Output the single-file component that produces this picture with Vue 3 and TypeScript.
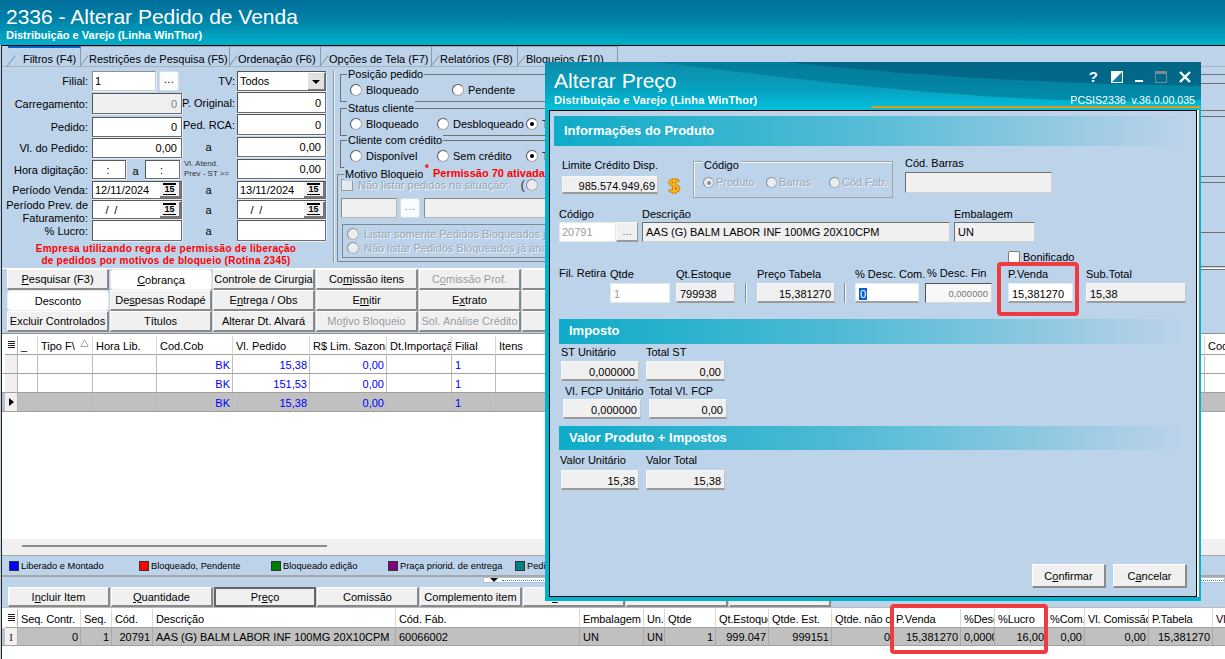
<script setup lang="ts">
interface Part { a: string; u: string; b: string }
interface Btn { label: string; parts: Part; cls: string }

function mk(label: string, cls = ''): Btn {
  const i = label.indexOf('&')
  const parts = i < 0
    ? { a: label, u: '', b: '' }
    : { a: label.slice(0, i), u: label[i + 1], b: label.slice(i + 2) }
  return { label, parts, cls }
}

const tabs = [
  { t: 'Filtros (F4)', w: 73, active: true },
  { t: 'Restrições de Pesquisa (F5)', w: 149 },
  { t: 'Ordenação (F6)', w: 91 },
  { t: 'Opções de Tela (F7)', w: 111 },
  { t: 'Relatórios (F8)', w: 86 },
  { t: 'Bloqueios (F10)', w: 100 },
]

const leftRows = [
  { label: 'Filial:', h: 20, mt: 0, items: [{ k: 'f', w: 64, text: '1', cls: 'l soft' }, { k: 'd', w: 20, cls: '' }] },
  { label: 'Carregamento:', h: 21, mt: 2, items: [{ k: 'f', w: 90, text: '0', cls: 'dis' }] },
  { label: 'Pedido:', h: 20, mt: 3, items: [{ k: 'f', w: 90, text: '0', cls: '' }] },
  { label: 'Vl. do Pedido:', h: 20, mt: 1, items: [{ k: 'f', w: 90, text: '0,00', cls: '' }] },
  { label: 'Hora digitação:', h: 19, mt: 2, items: [{ k: 'f', w: 34, text: ':', cls: 'c' }, { k: 'a', w: 19, text: 'a' }, { k: 'f', w: 35, text: ':', cls: 'c' }] },
  { label: 'Período Venda:', h: 18, mt: 2, items: [{ k: 'x', w: 90, text: '12/11/2024', cls: '' }] },
  { label: 'Período Prev. de Faturamento:', h: 19, mt: 1, two: true, items: [{ k: 'x', w: 90, text: ' / /', cls: 'dt' }] },
  { label: '% Lucro:', h: 21, mt: 1, items: [{ k: 'f', w: 90, text: '', cls: '' }] },
]

const rightRows = [
  { label: 'TV:', h: 20, mt: 0, k: 'combo', text: 'Todos' },
  { label: 'P. Original:', h: 21, mt: 1, k: 'f', text: '0' },
  { label: 'Ped. RCA:', h: 21, mt: 1, k: 'f', text: '0' },
  { label: 'a', h: 20, mt: 2, k: 'f', text: '0,00', ctr: true },
  { label: '', h: 20, mt: 2, k: 'f', text: '0,00', tiny: true },
  { label: 'a', h: 18, mt: 2, k: 'x', text: '13/11/2024', ctr: true },
  { label: 'a', h: 19, mt: 1, k: 'x', text: ' / /', ctr: true, dt: true },
  { label: 'a', h: 21, mt: 1, k: 'f', text: '', ctr: true },
]

const statusOpts = [
  { t: 'Bloqueado', w: 87 },
  { t: 'Desbloqueado', w: 89 },
  { t: 'Todos', w: 60, on: true },
]
const creditOpts = [
  { t: 'Disponível', w: 87 },
  { t: 'Sem crédito', w: 89 },
  { t: 'Todos', w: 60, on: true },
]

const btnRows: Btn[][] = [
  [mk('&Pesquisar (F3)'), mk('&Cobrança', 'flat'), mk('Controle de Cirurgia'), mk('Co&missão itens'), mk('C&omissão Prof.', 'off'), mk('Clientes')],
  [mk('Desconto', 'flat'), mk('De&spesas Rodapé'), mk('E&ntrega / Obs'), mk('E&mitir'), mk('E&xtrato'), mk('')],
  [mk('Excluir Controlados'), mk('Títulos'), mk('Alterar Dt. Alvará'), mk('Mo&tivo Bloqueio', 'off'), mk('Sol. Análise Crédito', 'off'), mk('Su', 'off')],
]

const bottomBtns: Btn[] = [
  mk('I&ncluir Item'), mk('&Quantidade'), mk('Pr&eço', 'focus'), mk('Comissão'), mk('Complemento item'), mk('E&xcluir Item'), mk(''), mk(''),
]

const g1Cols = [
  { t: '_', w: 20 }, { t: 'Tipo F\\', w: 55, sort: true }, { t: 'Hora Lib.', w: 64 }, { t: 'Cod.Cob', w: 76 },
  { t: 'Vl. Pedido', w: 77 }, { t: 'R$ Lim. Sazonal', w: 77 }, { t: 'Dt.Importação', w: 65 },
  { t: 'Filial', w: 44 }, { t: 'Itens', w: 709 }, { t: 'Cod', w: 30 },
]
const g1Rows = [
  { sel: false, v: ['', '', '', 'BK', '15,38', '0,00', '', '1', '', ''] },
  { sel: false, v: ['', '', '', 'BK', '151,53', '0,00', '', '1', '', ''] },
  { sel: true, v: ['', '', '', 'BK', '15,38', '0,00', '', '1', '', ''] },
]
const g1Align = ['l', 'l', 'l', 'r', 'r', 'r', 'l', 'l', 'l', 'l']

const g2Cols = [
  { t: 'Seq. Contr.', w: 63, a: 'r', v: '0' }, { t: 'Seq.', w: 31, a: 'r', v: '1' }, { t: 'Cód.', w: 41, a: 'r', v: '20791' },
  { t: 'Descrição', w: 243, a: 'l', v: 'AAS (G) BALM LABOR INF 100MG 20X10CPM' },
  { t: 'Cód. Fáb.', w: 184, a: 'l', v: '60066002' }, { t: 'Embalagem', w: 64, a: 'l', v: 'UN' },
  { t: 'Un.', w: 21, a: 'l', v: 'UN' }, { t: 'Qtde', w: 51, a: 'r', v: '1' },
  { t: 'Qt.Estoque', w: 53, a: 'r', v: '999.047' }, { t: 'Qtde. Est.', w: 63, a: 'r', v: '999151' },
  { t: 'Qtde. não coletada', w: 61, a: 'r', v: '0' }, { t: 'P.Venda', w: 68, a: 'r', v: '15,381270' },
  { t: '%Desc', w: 34, a: 'l', v: '0,000000' }, { t: '%Lucro', w: 52, a: 'r', v: '16,00' },
  { t: '%Com.', w: 38, a: 'r', v: '0,00' }, { t: 'Vl. Comissão', w: 64, a: 'r', v: '0,00' },
  { t: 'P.Tabela', w: 64, a: 'r', v: '15,381270' }, { t: 'Vl.', w: 30, a: 'r', v: '' },
]

const legend = [
  { t: 'Liberado e Montado', c: '#0000ff', w: 130 },
  { t: 'Bloqueado, Pendente', c: '#ff0000', w: 132 },
  { t: 'Bloqueado edição', c: '#008000', w: 117 },
  { t: 'Praça priorid. de entrega', c: '#800080', w: 127 },
  { t: 'Pedido', c: '#008080', w: 60 },
]

const stripLines = [8, 9, 27, 6, 60, 6, 50, 34, 3]

const priceFields = [
  { label: 'Qtde', value: '1', w: 60, ml: 0, cls: 'ghost' },
  { label: 'Qt.Estoque', value: '799938', w: 59, ml: 6, cls: 'ro l' },
  { sep: true, ml: 10 },
  { label: 'Preço Tabela', value: '15,381270', w: 78, ml: 10, cls: 'ro' },
  { sep: true, ml: 9 },
  { label: '% Desc. Com.', value: '0', w: 64, ml: 9, cls: 'wh l hl' },
  { label: '% Desc. Fin', value: '0,000000', w: 67, ml: 6, cls: 'sunk small', capCls: 'shift' },
  { label: 'P.Venda', value: '15,381270', w: 65, ml: 16, cls: 'wh l' },
  { label: 'Sub.Total', value: '15,38', w: 100, ml: 13, cls: 'ro l' },
]
</script>

<template>
  <div class="app">
    <header class="top">
      <div class="top-title">2336 - Alterar Pedido de Venda</div>
      <div class="top-sub">Distribuição e Varejo (Linha WinThor)</div>
    </header>

    <main class="frame">
      <nav class="tabs">
        <div v-for="t in tabs" :key="t.t" class="tab" :class="{ active: t.active }" :style="{ width: t.w + 'px' }">{{ t.t }}</div>
      </nav>

      <section class="panel">
        <div class="col left">
          <div v-for="r in leftRows" :key="r.label" class="row" :style="{ height: r.h + 'px', marginTop: r.mt + 'px' }">
            <span class="lbl" :class="{ two: r.two }">{{ r.label }}</span>
            <template v-for="(it, i) in r.items" :key="i">
              <span v-if="it.k === 'f'" class="fld" :class="it.cls" :style="{ width: it.w + 'px' }">{{ it.text }}</span>
              <span v-else-if="it.k === 'd'" class="dots" :style="{ width: it.w + 'px' }">...</span>
              <span v-else-if="it.k === 'a'" class="mid" :style="{ width: it.w + 'px' }">{{ it.text }}</span>
              <span v-else class="fld l date" :class="it.cls" :style="{ width: it.w + 'px' }">
                <span class="dtxt">{{ it.text }}</span><span class="cal"><span>15</span></span>
              </span>
            </template>
          </div>
          <p class="warn">Empresa utilizando regra de permissão de liberação<br />de pedidos por motivos de bloqueio (Rotina 2345)</p>
        </div>

        <div class="col right">
          <div v-for="(r, i) in rightRows" :key="i" class="row" :style="{ height: r.h + 'px', marginTop: r.mt + 'px' }">
            <span v-if="r.tiny" class="lbl2 tiny">Vl. Atend.<br />Prev - ST &gt;=</span>
            <span v-else class="lbl2" :class="{ ctr: r.ctr }">{{ r.label }}</span>
            <span v-if="r.k === 'combo'" class="fld l combo"><span>{{ r.text }}</span><span class="arrow"></span></span>
            <span v-else-if="r.k === 'x'" class="fld l date" :class="{ dt: r.dt }"><span class="dtxt">{{ r.text }}</span><span class="cal"><span>15</span></span></span>
            <span v-else class="fld wide">{{ r.text }}</span>
          </div>
        </div>

        <div class="vsep"></div>

        <div class="groups">
          <div class="grp g1">
            <span class="legend">Posição pedido</span>
            <div class="opts">
              <label class="opt" style="width: 102px"><i class="radio"></i>Bloqueado</label>
              <label class="opt"><i class="radio"></i>Pendente</label>
            </div>
          </div>
          <div class="grp g2">
            <span class="legend">Status cliente</span>
            <div class="opts">
              <label v-for="o in statusOpts" :key="o.t" class="opt" :style="{ width: o.w + 'px' }"><i class="radio" :class="{ on: o.on }"></i>{{ o.t }}</label>
            </div>
          </div>
          <div class="grp g3">
            <span class="legend">Cliente com crédito</span>
            <div class="opts">
              <label v-for="o in creditOpts" :key="o.t" class="opt" :style="{ width: o.w + 'px' }"><i class="radio" :class="{ on: o.on }"></i>{{ o.t }}</label>
            </div>
          </div>
          <div class="grp g4">
            <span class="legend">Motivo Bloqueio</span>
            <span class="perm"><sup>*</sup> Permissão 70 ativada</span>
            <div class="m-check">
              <i class="check"></i><span class="off">Não listar pedidos na situação:</span>
              <span class="paren">(</span><i class="radio dis"></i>
            </div>
            <div class="m-fields">
              <span class="box"></span><span class="dots small">...</span><span class="box long"></span>
            </div>
            <div class="inner">
              <div class="m-radio"><i class="radio dis"></i><span class="off">Listar somente Pedidos Bloqueados já analisados</span></div>
              <div class="m-radio"><i class="radio dis"></i><span class="off">Não listar Pedidos Bloqueados já analisados</span></div>
            </div>
          </div>
        </div>

        <div class="strip">
          <div v-for="(s, i) in stripLines" :key="i" class="strip-seg" :style="{ height: s + 'px' }"></div>
        </div>
      </section>

      <section class="actions">
        <div v-for="(row, ri) in btnRows" :key="ri" class="btn-row">
          <button v-for="(b, bi) in row" :key="bi" class="btn" :class="b.cls">{{ b.parts.a }}<u>{{ b.parts.u }}</u>{{ b.parts.b }}</button>
        </div>
      </section>

      <section class="grid-wrap">
        <div class="g-head">
          <div class="ind"><span class="listico"><b></b><b></b><b></b><b></b></span></div>
          <div v-for="c in g1Cols" :key="c.t" class="cell" :style="{ width: c.w + 'px' }">
            {{ c.t }}<svg v-if="c.sort" class="sort" width="9" height="8" viewBox="0 0 9 8" aria-hidden="true"><path d="M4.5 .8 L8.2 7.5 L.8 7.5 Z" fill="none" stroke="#a8a8a8" /></svg>
          </div>
        </div>
        <div v-for="(r, ri) in g1Rows" :key="ri" class="g-row blue" :class="{ sel: r.sel }">
          <div class="ind"><span v-if="r.sel" class="pointer"></span></div>
          <div v-for="(v, i) in r.v" :key="i" class="cell" :class="g1Align[i]" :style="{ width: g1Cols[i].w + 'px' }">{{ v }}</div>
        </div>
        <div class="g-fill"></div>
        <div class="g-foot"><span class="scroll"></span></div>
      </section>

      <section class="legend-bar">
        <div v-for="l in legend" :key="l.t" class="leg" :style="{ width: l.w + 'px' }">
          <i class="sw" :style="{ background: l.c }"></i>{{ l.t }}
        </div>
      </section>

      <div class="splitter">
        <div class="split-handle"><span class="chev"></span><span class="dotline"></span></div>
      </div>

      <section class="actions2">
        <button v-for="(b, i) in bottomBtns" :key="i" class="btn" :class="b.cls">{{ b.parts.a }}<u>{{ b.parts.u }}</u>{{ b.parts.b }}</button>
      </section>

      <section class="grid2">
        <div class="g-head">
          <div class="ind"><span class="listico"><b></b><b></b><b></b><b></b></span></div>
          <div v-for="c in g2Cols" :key="c.t" class="cell" :style="{ width: c.w + 'px' }">{{ c.t }}</div>
        </div>
        <div class="g-row sel short">
          <div class="ind plain">I</div>
          <div v-for="c in g2Cols" :key="c.t" class="cell" :class="c.a" :style="{ width: c.w + 'px' }">{{ c.v }}</div>
        </div>
      </section>
    </main>

    <aside class="dialog">
      <div class="dlg-bar">
        <svg class="swoosh" viewBox="0 0 656 48" preserveAspectRatio="none" aria-hidden="true">
          <path d="M110 0 C230 14 330 28 470 36 C540 40 610 40 656 38 L656 0 Z" fill="#006f90" opacity=".55" />
          <path d="M240 0 C340 10 440 20 656 24 L656 0 Z" fill="#005a7c" opacity=".65" />
        </svg>
        <div class="dlg-titles">
          <div class="dlg-title">Alterar Preço</div>
          <div class="dlg-sub">Distribuição e Varejo (Linha WinThor)</div>
        </div>
        <div class="dlg-right">
          <div class="winbtns">
            <span class="help">?</span>
            <svg width="12" height="12" viewBox="0 0 12 12"><rect width="12" height="12" fill="#fff" /><path d="M11 1 L1 11 L11 11 Z" fill="#0b7d9c" /></svg>
            <svg width="8" height="12" viewBox="0 0 8 12"><rect y="9" width="8" height="2" fill="#fff" /></svg>
            <svg width="12" height="12" viewBox="0 0 12 12"><rect x=".5" y=".5" width="11" height="11" fill="none" stroke="#7b8c94" /><rect width="12" height="3" fill="#7b8c94" /></svg>
            <svg width="12" height="12" viewBox="0 0 12 12"><path d="M1 1 L11 11 M11 1 L1 11" stroke="#fff" stroke-width="2.4" /></svg>
          </div>
          <div class="dlg-ver">PCSIS2336&nbsp; v.36.0.00.035</div>
        </div>
        <div class="orange"></div>
      </div>

      <div class="dlg-body">
        <div class="sec first">Informações do Produto</div>

        <div class="a-row">
          <div class="blk limit">
            <span class="cap">Limite Crédito Disp.</span>
            <span class="ro box-l">985.574.949,69</span>
          </div>
          <svg class="dollar" width="14" height="18" viewBox="0 0 14 18" aria-hidden="true">
            <path d="M7 1 V17 M11.5 5 C10 3 3 2.6 3 5.6 C3 9 11.5 7.6 11.5 11.6 C11.5 15 4 15 2.4 12.6" fill="none" stroke="#c77a00" stroke-width="3.6" />
            <path d="M7 1 V17 M11.5 5 C10 3 3 2.6 3 5.6 C3 9 11.5 7.6 11.5 11.6 C11.5 15 4 15 2.4 12.6" fill="none" stroke="#fbb51d" stroke-width="2" />
          </svg>
          <div class="cod-grp">
            <span class="legend2">Código</span>
            <div class="cod-opts">
              <label class="opt2" style="width: 63px"><i class="radio dis on"></i>Produto</label>
              <label class="opt2" style="width: 63px"><i class="radio dis"></i>Barras</label>
              <label class="opt2"><i class="radio dis"></i>Cód.Fab.</label>
            </div>
          </div>
          <div class="blk barras">
            <span class="cap">Cód. Barras</span>
            <span class="sunk tall"></span>
          </div>
        </div>

        <div class="b-row">
          <div class="blk">
            <span class="cap">Código</span>
            <div class="pair"><span class="ghost cod">20791</span><span class="dots2">...</span></div>
          </div>
          <div class="blk">
            <span class="cap">Descrição</span>
            <span class="sunk2 desc">AAS (G) BALM LABOR INF 100MG 20X10CPM</span>
          </div>
          <div class="blk">
            <span class="cap">Embalagem</span>
            <span class="sunk2 emb">UN</span>
          </div>
        </div>

        <div class="bonif"><i class="check light"></i>Bonificado</div>

        <div class="d-row">
          <div class="fil"><span class="cap">Fil. Retira</span></div>
          <template v-for="(f, i) in priceFields" :key="i">
            <span v-if="f.sep" class="dsep" :style="{ marginLeft: f.ml + 'px' }"></span>
            <div v-else class="blk" :style="{ marginLeft: f.ml + 'px', width: f.w + 'px' }">
              <span class="cap nowrap" :class="f.capCls">{{ f.label }}</span>
              <span class="val" :class="f.cls"><em v-if="f.cls?.includes('hl')">{{ f.value }}</em><template v-else>{{ f.value }}</template></span>
            </div>
          </template>
        </div>

        <div class="sec imp">Imposto</div>
        <div class="tax t1">
          <div class="blk w78"><span class="cap">ST Unitário</span><span class="val ro">0,000000</span></div>
          <div class="blk w79"><span class="cap">Total ST</span><span class="val ro">0,00</span></div>
        </div>
        <div class="tax t2">
          <div class="blk w78"><span class="cap ind2">Vl. FCP Unitário</span><span class="val ro">0,000000</span></div>
          <div class="blk w78b"><span class="cap">Total Vl. FCP</span><span class="val ro">0,00</span></div>
        </div>
        <div class="sec val-sec">Valor Produto + Impostos</div>
        <div class="tax t3">
          <div class="blk w78"><span class="cap neg">Valor Unitário</span><span class="val ro">15,38</span></div>
          <div class="blk w79"><span class="cap">Valor Total</span><span class="val ro">15,38</span></div>
        </div>

        <div class="dlg-actions">
          <button class="btn dlg">C<u>o</u>nfirmar</button>
          <button class="btn dlg">C<u>a</u>ncelar</button>
        </div>
      </div>
    </aside>

    <div class="mark m1"></div>
    <div class="mark m2"></div>
  </div>
</template>

<style>
html, body { margin: 0; padding: 0; background: #bdd3ea; }
</style>

<style scoped>
.app {
  position: relative;
  width: 1225px;
  height: 659px;
  overflow: hidden;
  background: #bdd3ea;
  font: 11px/14px "Liberation Sans", Arial, sans-serif;
  color: #000;
}
* { box-sizing: border-box; }

.top {
  height: 45px;
  padding: 5px 0 0 6px;
  background: linear-gradient(180deg, #006f9c 0%, #0082a8 45%, #00b0cb 100%);
  color: #fff;
}
.top-title { font-size: 21px; line-height: 23px; }
.top-sub { font-size: 11px; line-height: 13px; font-weight: 700; margin-top: 1px; }

.frame {
  height: 614px;
  margin-left: 1px;
  border-top: 1px solid #000;
  border-left: 1px solid #222;
  display: flex;
  flex-direction: column;
}

.tabs {
  height: 21px;
  display: flex;
  padding-left: 6px;
  background: #bdd3ea;
  border-bottom: 1px solid #a9b3bc;
  flex: none;
}
.tab {
  position: relative;
  height: 20px;
  padding: 5px 0 0 8px;
  border-top: 1px solid #9aa6b0;
  border-right: 1px solid #8e98a2;
  white-space: nowrap;
  flex: none;
}
.tab::before {
  content: "";
  position: absolute;
  left: -1px;
  bottom: -1px;
  width: 14px;
  height: 1px;
  background: #8e98a2;
  transform: rotate(-52deg);
  transform-origin: left bottom;
}
.tab.active { border-top: 2px solid #0a62c9; padding-left: 15px; padding-top: 4px; }

.panel { height: 201px; display: flex; flex: none; align-items: flex-start; }
.col { padding-top: 4px; flex: none; }
.col.left { width: 180px; }
.col.right { width: 144px; }
.row { display: flex; align-items: center; }
.lbl { width: 86px; margin-right: 4px; text-align: right; white-space: nowrap; flex: none; }
.lbl.two { white-space: normal; line-height: 13px; margin-top: 4px; height: 26px; }
.lbl2 { width: 53px; margin-right: 2px; text-align: right; white-space: nowrap; flex: none; }
.lbl2.ctr { text-align: center; }
.lbl2.tiny { font-size: 8px; line-height: 10px; text-align: left; padding-left: 2px; color: #333; }
.fld {
  display: flex;
  height: 100%;
  align-items: center;
  justify-content: flex-end;
  padding: 0 4px 0 2px;
  background: #fff;
  border: 1px solid #6d6d6d;
  border-top-color: #555;
  border-left-color: #555;
  box-shadow: 0 1px 0 #e8eef5, 1px 0 0 #e8eef5;
  white-space: pre;
  flex: none;
}
.fld.wide { width: 89px; }
.fld.l { justify-content: flex-start; }
.fld.c { justify-content: center; }
.fld.dis { background: #f0f0f0; color: #808080; }
.fld.soft { border-color: #c6ccd2; border-top-color: #8f8f8f; border-left-color: #8f8f8f; }
.fld.combo, .fld.date { width: 89px; justify-content: space-between; padding-right: 0; }
.dtxt { white-space: pre; }
.dt .dtxt { padding-left: 6px; letter-spacing: 1.4px; }
.arrow {
  width: 17px;
  height: 17px;
  background: #e1e1e1;
  border-right: 1px solid #777;
  border-bottom: 1px solid #777;
  position: relative;
  flex: none;
}
.arrow::after {
  content: "";
  position: absolute;
  left: 4px;
  top: 7px;
  border: 4px solid transparent;
  border-top: 4px solid #000;
  border-bottom: 0;
}
.cal {
  width: 21px;
  height: 16px;
  background: #f0f0f0;
  border-right: 2px solid #777;
  border-bottom: 2px solid #777;
  display: flex;
  align-items: center;
  justify-content: center;
  flex: none;
}
.cal span {
  font-size: 9px;
  font-weight: 700;
  line-height: 8px;
  border-top: 2px solid #000;
  border-bottom: 1px solid #000;
  padding: 0 1px;
  height: 12px;
}
.dots {
  height: 100%;
  margin-left: 3px;
  background: #fbfcfe;
  border-radius: 3px;
  border: 1px solid #d8dde3;
  text-align: center;
  letter-spacing: .5px;
  flex: none;
}
.mid { text-align: center; flex: none; padding-top: 3px; }
.warn {
  margin: 2px 0 0;
  width: 328px;
  text-align: center;
  color: #f00;
  font: 700 10px/12px "Liberation Sans", Arial, sans-serif;
  letter-spacing: .25px;
}
.vsep {
  width: 2px;
  height: 192px;
  margin: 3px 0 0 7px;
  border-left: 1px solid #8a97a3;
  border-right: 1px solid #eef3f8;
  flex: none;
}
.groups { width: 864px; margin-left: 2px; flex: none; height: 201px; position: relative; }
.grp { position: relative; border: 1px solid #6f6f6f; border-right-color: transparent; margin-left: 3px; }
.g1 { height: 28px; margin-top: 7px; }
.g2 { height: 28px; margin-top: 6px; }
.g3 { height: 28px; margin-top: 4px; }
.g4 { height: 88px; margin-top: 6px; margin-left: 0; border-color: #7d8790; }
.legend { position: absolute; left: 6px; top: -8px; padding: 0 1px; line-height: 14px; background: #bdd3ea; }
.opts { display: flex; padding: 8px 0 0 9px; }
.opt { display: flex; align-items: center; white-space: nowrap; flex: none; }
.radio {
  display: inline-block;
  width: 12px;
  height: 12px;
  margin-right: 4px;
  border-radius: 50%;
  background: #fff;
  border: 1px solid #a5a5a5;
  border-top-color: #555;
  border-left-color: #555;
  position: relative;
  flex: none;
}
.radio.on::after {
  content: "";
  position: absolute;
  left: 3px;
  top: 3px;
  width: 4px;
  height: 4px;
  border-radius: 50%;
  background: #000;
}
.radio.dis { background: #e9edf2; border-color: #b0b0b0; border-top-color: #8a8a8a; border-left-color: #8a8a8a; }
.radio.dis.on::after { background: #8f8f8f; }
.perm {
  position: absolute;
  left: 85px;
  top: -9px;
  padding-left: 2px;
  color: #f00;
  background: #bdd3ea;
  font: 700 11px/14px "Liberation Sans", Arial, sans-serif;
  white-space: nowrap;
}
.perm sup { font-size: 10px; line-height: 0; margin-right: 1px; }
.off { color: #9aa7b4; text-shadow: 1px 1px 0 #f2f6fb; white-space: nowrap; }
.m-check { display: flex; align-items: center; height: 14px; margin: 3px 0 0 3px; }
.check {
  display: inline-block;
  width: 12px;
  height: 12px;
  margin-right: 5px;
  background: #e6e9ec;
  border: 1px solid #9b9b9b;
  flex: none;
}
.check.light { background: #fff; border-radius: 2px; border-color: #7d7d7d; margin-right: 3px; }
.paren { margin-left: 12px; margin-right: 1px; font-size: 13px; color: #333; }
.m-fields { display: flex; margin: 6px 0 0 3px; height: 20px; }
.box { width: 56px; background: #f0f0f0; border: 1px solid #b9b9b9; border-top-color: #8a8a8a; border-left-color: #8a8a8a; flex: none; }
.box.long { width: 700px; margin-left: 4px; }
.dots.small { color: #8a8a8a; margin-left: 3px; width: 20px; }
.inner { border: 1px solid #7d8790; border-right-color: transparent; margin: 6px 0 0 4px; height: 34px; padding: 2px 0 0 4px; }
.inner .radio { margin-right: 5px; }
.m-radio { display: flex; align-items: center; height: 14px; }

.strip { width: 24px; flex: none; }
.strip-seg { border-bottom: 1px solid #6f6f6f; }

.actions { height: 65px; border-top: 1px solid #fff; padding-left: 5px; flex: none; }
.btn-row { display: flex; height: 21px; }
.btn {
  width: 102px;
  height: 21px;
  margin: 0 1px 0 0;
  padding: 0;
  background: #f0f0f0;
  border: 1px solid #fff;
  border-right: 2px solid #8a8a8a;
  border-bottom: 2px solid #8a8a8a;
  font: inherit;
  color: #000;
  white-space: nowrap;
  overflow: hidden;
  flex: none;
}
.btn.flat { background: #fff; border: 1px solid #e6edf5; border-radius: 4px; }
.btn.off { color: #9a9a9a; }
.btn.focus { border: 2px solid #666; }

.grid-wrap {
  height: 222px;
  padding-top: 2px;
  background: #fff;
  border-top: 1px solid #8f8f8f;
  display: flex;
  flex-direction: column;
  flex: none;
}
.g-head, .g-row { display: flex; padding-left: 3px; flex: none; }
.g-head { height: 19px; background: #fff; }
.g-row { height: 19px; border-bottom: 1px solid #a0a0a0; background: #fff; }
.g-row.short { height: 18px; }
.g-row.blue { color: #0000ff; }
.g-row.sel { background: #c0c0c0; }
.cell {
  padding: 3px 2px 0 3px;
  border-right: 1px solid #bdbdbd;
  overflow: hidden;
  white-space: nowrap;
  flex: none;
  position: relative;
}
.g-head .cell { padding-right: 0; border-right-color: #d8d8d8; border-bottom: 1px solid #a0a0a0; }
.grid2 .g-head .cell { letter-spacing: -.1px; }
.cell.r { text-align: right; }
.cell.l { text-align: left; }
.ind {
  width: 13px;
  flex: none;
  background: #f0f0f0;
  border-right: 1px solid #b5b5b5;
  position: relative;
}
.g-head .ind { background: #fff; border-bottom: 1px solid #a0a0a0; }
.ind.plain { font: 11px/18px "Liberation Serif", serif; text-align: center; color: #222; background: #f0f0f0; }
.listico { position: absolute; left: 3px; top: 5px; width: 7px; }
.listico b { display: block; height: 1px; margin-bottom: 1px; background: #222; }
.pointer {
  position: absolute;
  left: 4px;
  top: 5px;
  border-left: 5px solid #000;
  border-top: 4px solid transparent;
  border-bottom: 4px solid transparent;
}
.sort { position: absolute; left: 42px; top: 3px; }
.g-fill { flex: 1; }
.g-foot { height: 16px; background: #f0f0f0; padding: 6px 0 0 20px; flex: none; }
.scroll { display: block; width: 305px; height: 2px; background: #8c8c8c; }

.legend-bar {
  height: 20px;
  display: flex;
  align-items: center;
  padding-left: 7px;
  border-top: 1px solid #a8a8a8;
  font-size: 9.3px;
  flex: none;
}
.leg { display: flex; align-items: center; white-space: nowrap; flex: none; }
.sw { width: 10px; height: 10px; border: 1px solid #333; margin-right: 2px; flex: none; }
.splitter {
  height: 10px;
  border-top: 2px solid #a8a8a8;
  padding-left: 481px;
  flex: none;
}
.split-handle { height: 6px; background: #fff; border: 1px solid #b7c3cf; display: flex; align-items: center; }
.chev {
  margin: 0 4px 0 6px;
  width: 0;
  border-left: 4px solid transparent;
  border-right: 4px solid transparent;
  border-top: 4px solid #111;
  flex: none;
}
.dotline { flex: 1; height: 1px; border-top: 1px dotted #1e7fe0; }
.actions2 { height: 22px; padding: 2px 0 0 6px; display: flex; flex: none; }
.actions2 .btn { height: 20px; }
.grid2 { height: 52px; background: #fff; padding-top: 1px; border-top: 1px solid #bbb; flex: none; overflow: hidden; }
.grid2 .g-row .cell { border-right-color: #a9a9a9; padding-top: 2px; }

.dialog {
  position: absolute;
  left: 545px;
  top: 62px;
  width: 656px;
  height: 539px;
  padding: 0 4px 4px 3px;
  background: #00b4ce;
  display: flex;
  flex-direction: column;
}
.dlg-bar {
  position: relative;
  height: 48px;
  margin: 0 -4px 0 -3px;
  padding: 0 6px 0 9px;
  display: flex;
  justify-content: space-between;
  background: linear-gradient(180deg, #0c8bab 0%, #07a0be 55%, #00c1dd 100%);
  color: #fff;
  flex: none;
  overflow: hidden;
}
.swoosh { position: absolute; inset: 0; width: 100%; height: 100%; }
.dlg-titles, .dlg-right { position: relative; }
.dlg-title { font-size: 21px; line-height: 24px; margin-top: 7px; }
.dlg-sub { font-size: 11px; line-height: 13px; font-weight: 700; margin-top: 1px; letter-spacing: .2px; }
.dlg-right { display: flex; flex-direction: column; align-items: flex-end; }
.winbtns { display: flex; align-items: center; gap: 12px; height: 12px; margin: 9px 4px 0 0; }
.help { font: 700 15px/12px "Liberation Sans", sans-serif; margin-right: 1px; }
.dlg-ver { font-size: 10.6px; line-height: 14px; margin-top: 10px; }
.orange { position: absolute; right: 1px; bottom: 2px; width: 329px; height: 2px; background: #e69a14; }
.dlg-body {
  flex: 1;
  margin-left: 1px;
  padding: 5px 0 0 4px;
  background: #bdd3ea;
  border: 1px solid #000;
  box-shadow: 2px 0 0 #fff;
  display: flex;
  flex-direction: column;
  min-height: 0;
}
.sec {
  height: 25px;
  margin-left: 5px;
  width: 628px;
  padding-left: 10px;
  background: linear-gradient(90deg, #0eabc8 0%, #4fbad4 45%, #bdd3ea 100%);
  color: #fff;
  font-weight: 700;
  font-size: 13px;
  line-height: 24px;
  flex: none;
}
.sec.first { height: 30px; margin-left: 0; width: 636px; line-height: 30px; }
.a-row { display: flex; height: 60px; padding-left: 8px; flex: none; }
.blk { display: flex; flex-direction: column; flex: none; }
.cap { line-height: 14px; white-space: nowrap; }
.limit { margin-top: 12px; width: 96px; }
.box-l { width: 96px; height: 18px; margin-top: 4px; text-align: right; padding: 2px 2px 0 0; line-height: 14px; }
.ro, .val.ro {
  background: #f0f0f0;
  border: 1px solid #f5f8fb;
  border-bottom: 2px solid #9a9a9a;
  border-right: 1px solid #c5c5c5;
}
.dollar { margin: 31px 0 0 9px; flex: none; }
.cod-grp { position: relative; width: 200px; height: 37px; margin: 15px 0 0 12px; border: 1px solid #a3a3a3; box-shadow: inset 1px 1px 0 #f4f7fb; flex: none; }
.legend2 { position: absolute; left: 8px; top: -3px; padding: 0 2px; background: #bdd3ea; line-height: 13px; }
.cod-opts { display: flex; padding: 13px 0 0 9px; }
.opt2 { display: flex; align-items: center; color: #9aa7b4; text-shadow: 1px 1px 0 #f2f6fb; white-space: nowrap; flex: none; }
.opt2 .radio { margin-right: 2px; width: 11px; height: 11px; }
.barras { margin: 10px 0 0 12px; }
.sunk { display: block; background: #f0f0f0; border: 1px solid #6f6f6f; border-right-color: #cfcfcf; border-bottom-color: #cfcfcf; text-align: right; padding-right: 2px; color: #8a8a8a; }
.sunk.tall { width: 147px; height: 21px; margin-top: 2px; }
.b-row { display: flex; gap: 4px; height: 40px; padding: 1px 0 0 5px; flex: none; }
.pair { display: flex; margin-top: 1px; }
.ghost { display: block; background: #fff; border: 1px solid #e4e9ef; color: #9a9a9a; }
.cod { width: 57px; height: 20px; padding: 2px 0 0 2px; }
.dots2 { width: 22px; height: 20px; background: #f0f0f0; border: 1px solid #f8fafc; border-right: 1px solid #999; border-bottom: 2px solid #999; text-align: center; color: #666; line-height: 16px; }
.sunk2 { display: block; height: 20px; margin-top: 1px; padding: 2px 0 0 3px; background: #f0f0f0; border: 1px solid #707070; border-right-color: #d0d0d0; border-bottom-color: #d0d0d0; white-space: nowrap; }
.desc { width: 308px; }
.emb { width: 81px; }
.bonif { display: flex; align-items: center; height: 14px; margin: 4px 0 0 454px; flex: none; }
.d-row { display: flex; height: 50px; margin-top: 2px; padding-left: 5px; flex: none; }
.fil { width: 51px; flex: none; }
.d-row .cap { margin-bottom: 2px; margin-top: 1px; }
.d-row .cap.shift { margin-left: 2px; margin-top: 0; margin-bottom: 3px; }
.nowrap { white-space: nowrap; }
.val {
  display: block;
  height: 20px;
  padding: 3px 3px 0;
  line-height: 14px;
  text-align: right;
  white-space: nowrap;
}
.val.l { text-align: left; }
.val.ghost { text-align: left; }
.val.wh { background: #fff; border: 1px solid #e6ecf3; border-bottom: 2px solid #a0a0a0; }
.val.hl em { font-style: normal; background: #0a5fd0; color: #fff; padding: 0 1px; }
.val.sunk { background: #f7f7f7; border: 1px solid #555; border-right-color: #d5d5d5; border-bottom-color: #d5d5d5; }
.val.small { font-size: 9.5px; color: #777; }
.dsep { width: 2px; height: 20px; margin-top: 17px; border-left: 1px solid #8a8a8a; border-right: 1px solid #f0f4f8; flex: none; }
.imp { margin-top: 3px; }
.tax { display: flex; padding-left: 7px; flex: none; }
.t1 { padding-top: 1px; }
.t1 .cap { margin-bottom: 2px; }
.t2 { padding-left: 9px; margin-top: 3px; }
.t2 .cap { margin-bottom: 1px; }
.t3 { padding-top: 3px; }
.t3 .cap { margin-bottom: 3px; }
.w78 { width: 78px; }
.w79 { width: 79px; margin-left: 7px; }
.w78b { width: 78px; margin-left: 8px; }
.ind2 { margin-left: 2px; }
.neg { margin-left: -1px; }
.sec.val-sec { margin-top: 7px; height: 24px; }
.dlg-actions { display: flex; justify-content: flex-end; gap: 7px; margin-top: auto; padding: 0 9px 8px 0; }
.btn.dlg { width: 74px; height: 24px; margin: 0; }

.mark {
  position: absolute;
  border: 4px solid #ee3b40;
  border-radius: 4px;
  pointer-events: none;
}
.m1 { left: 997px; top: 262px; width: 82px; height: 54px; }
.m2 { left: 890px; top: 604px; width: 158px; height: 50px; }
</style>
